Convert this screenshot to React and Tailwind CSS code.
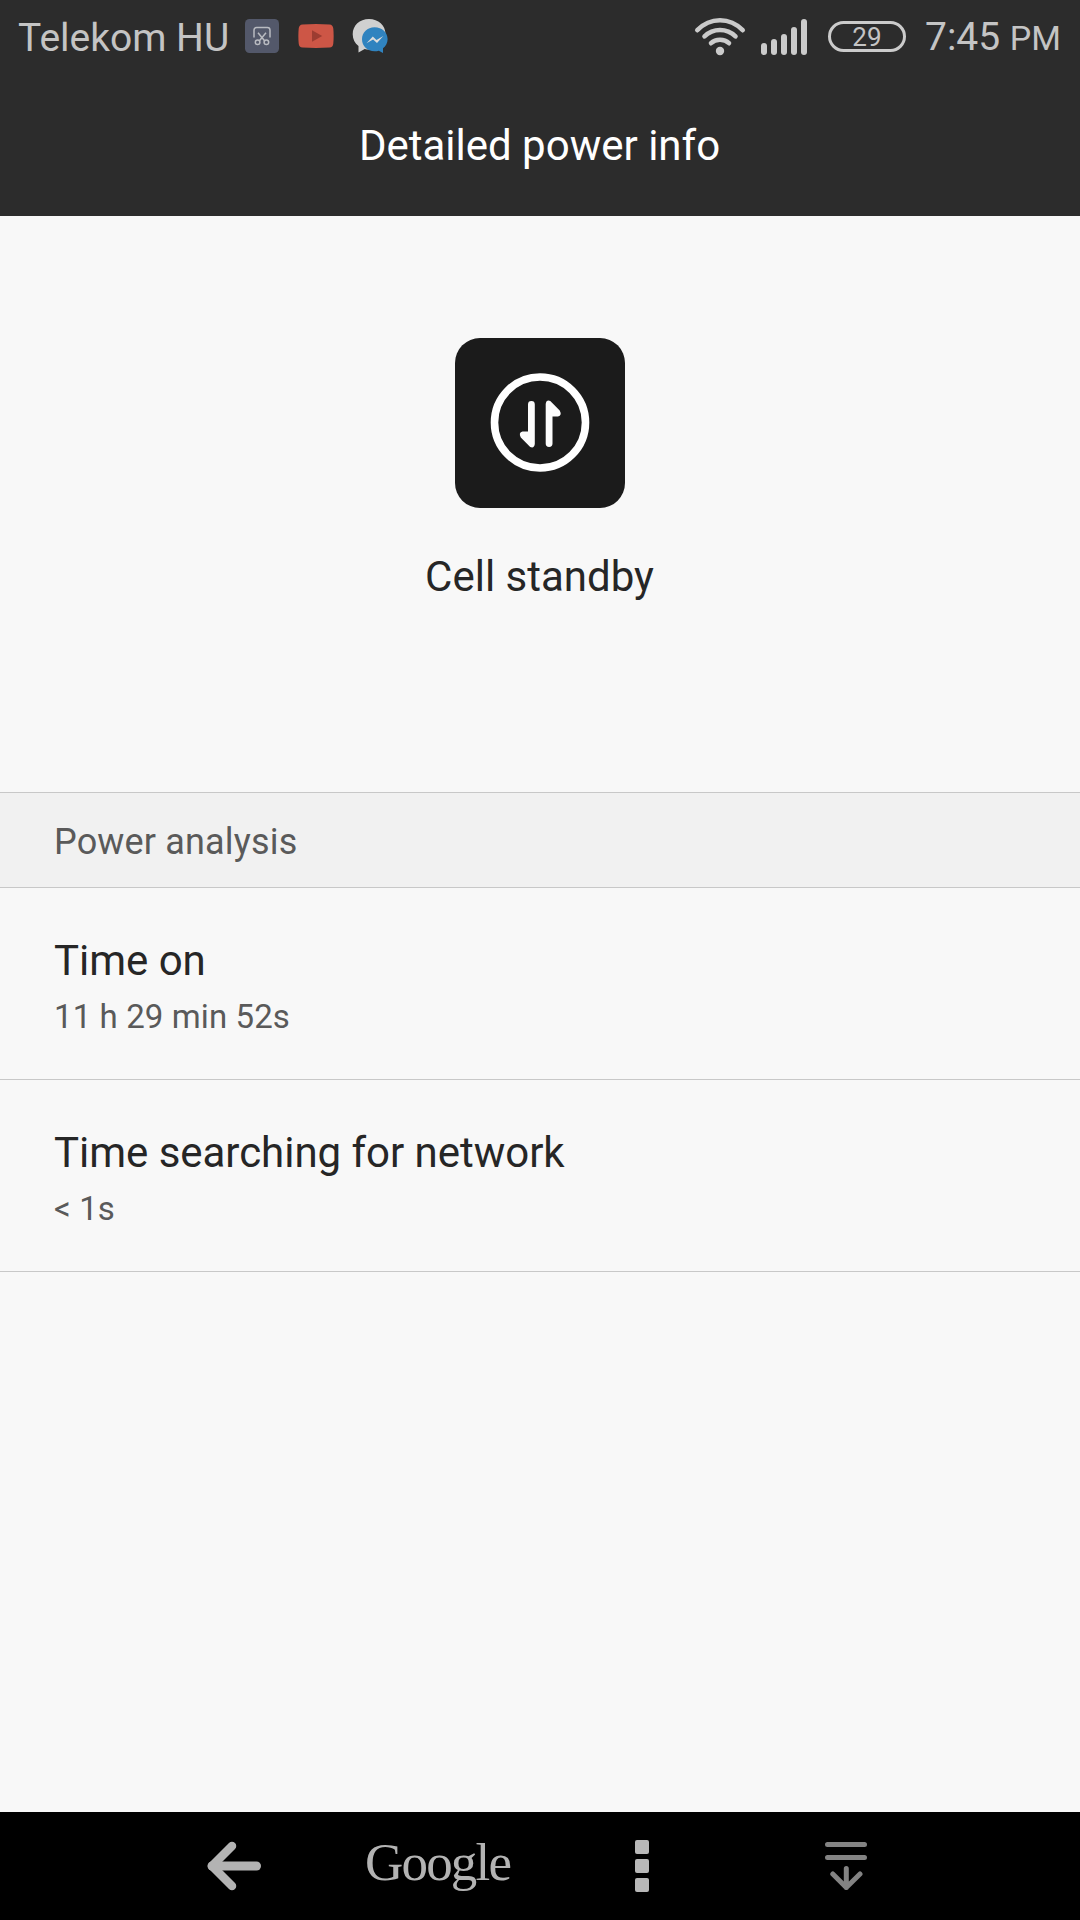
import React from "react";

const rows = [
  { title: "Time on", value: "11 h 29 min 52s" },
  { title: "Time searching for network", value: "< 1s" },
];

const ScreenshotIcon = () => (
  <svg width="34" height="34" viewBox="0 0 34 34" fill="none">
    <rect width="34" height="34" rx="4.5" fill="#53586a" />
    <g stroke="#b9bbc1" strokeWidth="1.5">
      <path d="M9 18.5V11.2a2.6 2.6 0 0 1 2.6-2.6h10.8a2.6 2.6 0 0 1 2.6 2.6v7.3" />
      <path d="M13 13.8l6.8 8.2M21 13.8L14.2 22" />
      <circle cx="12.6" cy="23.2" r="2.3" />
      <circle cx="21.4" cy="23.2" r="2.3" />
    </g>
  </svg>
);

const VideoIcon = () => (
  <svg width="36" height="24" viewBox="0 0 36 24">
    <path d="M4.5.4Q18-.4 31.5.4Q35 .7 35.3 4.5Q36 12 35.3 19.5Q35 23.3 31.5 23.6Q18 24.4 4.5 23.6Q1 23.3.7 19.5Q0 12 .7 4.5Q1 .7 4.5.4Z" fill="#cd5646" />
    <path d="M14 6.3v11.4L24.2 12z" fill="#9c3c31" />
  </svg>
);

const MessengerIcon = () => (
  <svg width="36" height="34" viewBox="0 0 36 34">
    <path d="M17 0C7.6 0 .7 6.6.7 15.2c0 4.8 2.2 9 5.8 11.8V33.5l6.2-3.5c1.4.4 2.8.5 4.3.5C26 30.5 33.5 24 33.5 15.2S26.4 0 17 0z" fill="#d0d0d0" />
    <path d="M22.6 8.3C15.3 8.3 10 13.6 10 20.3S15.3 32.3 22.6 32.3c1.5 0 2.9-.2 4.2-.6L31 34v-4.8c2.9-2.1 4.6-5.3 4.6-8.9 0-6.7-5.4-12-13-12z" fill="#3083bf" />
    <path d="M14.5 24.3l6.3-6.8 3.7 3.6 6.8-4.2-6.3 7.1-3.9-3.6z" fill="#dcdcdc" />
  </svg>
);

const WifiIcon = () => (
  <svg width="52" height="38" viewBox="0 0 52 38" fill="none" stroke="#cbcbcb" strokeWidth="4.6" strokeLinecap="round">
    <path d="M3.3 12.2Q13 2.3 26 2.3T48.7 12.2" />
    <path d="M10.5 18.3Q17 12 26 12T41.5 18.3" />
    <path d="M17 25.2Q20.5 21.8 26 21.8T35 25.2" />
    <circle cx="26" cy="33" r="4.2" fill="#cbcbcb" stroke="none" />
  </svg>
);

const SignalIcon = () => (
  <svg width="47" height="36" viewBox="0 0 47 36" fill="#cbcbcb">
    <rect x="0" y="24" width="6" height="12" rx="3" />
    <rect x="10" y="20" width="6" height="16" rx="3" />
    <rect x="20" y="15" width="6" height="21" rx="3" />
    <rect x="30" y="8" width="6" height="28" rx="3" />
    <rect x="40" y="0" width="6" height="36" rx="3" />
  </svg>
);

const StandbyIcon = () => (
  <svg width="170" height="170" viewBox="0 0 170 170" fill="none">
    <rect width="170" height="170" rx="25" fill="#1b1b1b" />
    <circle cx="85" cy="84.5" r="45.5" stroke="#fff" strokeWidth="7.6" />
    <path d="M73 66.5a3.4 3.4 0 0 1 6.8 0v39.5q-.6 4.6-4.6 3L65.8 99.5q-2.6-4.8 1.7-6H73z" fill="#fcfcfc" />
    <path d="M97.5 105.5a3.4 3.4 0 0 1-6.8 0V66q.6-4.6 4.6-3l9.4 9.5q2.6 4.8-1.7 6H97.5z" fill="#fcfcfc" />
  </svg>
);

const StatusBar = () => (
  <div className="flex h-[75px] items-center justify-between pl-[18px] pr-[19px] text-[#c4c4c4]">
    <div className="flex items-center">
      <p className="w-[227px] text-[39px] leading-[72px]">Telekom HU</p>
      <div className="flex items-center pb-[3px]">
        <ScreenshotIcon />
        <div className="ml-[19px]">
          <VideoIcon />
        </div>
        <div className="ml-[18px]">
          <MessengerIcon />
        </div>
      </div>
    </div>
    <div className="flex items-center">
      <div className="flex items-center pb-[2px]">
        <WifiIcon />
        <div className="ml-[15px]">
          <SignalIcon />
        </div>
        <div className="ml-[20px] flex h-[31px] w-[78px] items-center justify-center rounded-full border-3 border-[#cbcbcb] text-[26px] leading-none">
          29
        </div>
      </div>
      <p className="ml-[19px] text-[39px] leading-[72px]">
        7:45 <span className="text-[34px]">PM</span>
      </p>
    </div>
  </div>
);

const NavBar = () => (
  <div className="flex h-[108px] items-center bg-black pl-[207px] text-[#b3b3b3]">
    <svg width="54" height="50" viewBox="0 0 54 50" fill="none" stroke="currentColor" strokeWidth="8.5" strokeLinejoin="round" strokeLinecap="round">
      <path d="M25 5L5 25l20 20" />
      <path d="M5 25h44.5" strokeWidth="9" />
    </svg>
    <p className="ml-[104px] w-[150px] pb-[9px] font-['Liberation_Serif',serif] text-[53px] leading-[64px] tracking-[-1.8px]">Google</p>
    <div className="ml-[120px] flex flex-col gap-[5px]">
      <span className="h-[14px] w-[14px] rounded-[2px] bg-[#b8b8b8]" />
      <span className="h-[14px] w-[14px] rounded-[2px] bg-[#b8b8b8]" />
      <span className="h-[14px] w-[14px] rounded-[2px] bg-[#b8b8b8]" />
    </div>
    <svg className="ml-[176px]" width="42" height="48" viewBox="0 0 42 48" fill="none" stroke="#838383" strokeWidth="5" strokeLinecap="round" strokeLinejoin="round">
      <path d="M2.5 2.5h37M2.5 15.5h37M21.3 26.5v19M7.8 32l13.5 13.5L35 32" />
    </svg>
  </div>
);

const App = () => {
  return (
    <div className="flex h-[1920px] w-[1080px] flex-col overflow-hidden bg-[#f8f8f8] font-[Roboto,sans-serif]">
      <header className="h-[216px] bg-[#2c2c2c]">
        <StatusBar />
        <h1 className="pr-[1px] text-center text-[42px] leading-[141px] text-white">Detailed power info</h1>
      </header>

      <main className="flex-1">
        <section className="flex h-[576px] flex-col items-center pt-[122px]">
          <StandbyIcon />
          <p className="mt-[39px] pr-[1px] text-[42px] leading-[60px] text-[#262626]">Cell standby</p>
        </section>

        <h2 className="h-[96px] border-y border-[#c8c8c8] bg-[#f1f1f1] pl-[54px] text-[36px] leading-[99px] tracking-[0.17px] text-[#5a5a5a]">
          Power analysis
        </h2>

        {rows.map((row) => (
          <div key={row.title} className="h-[192px] border-b border-[#c8c8c8] pl-[54px] pt-[43px]">
            <p className="text-[42px] leading-[60px] tracking-[-0.03px] text-[#262626]">{row.title}</p>
            <p className="text-[33px] leading-[51px] tracking-[0.1px] text-[#5a5a5a]">{row.value}</p>
          </div>
        ))}
      </main>

      <NavBar />
    </div>
  );
};

export default App;
